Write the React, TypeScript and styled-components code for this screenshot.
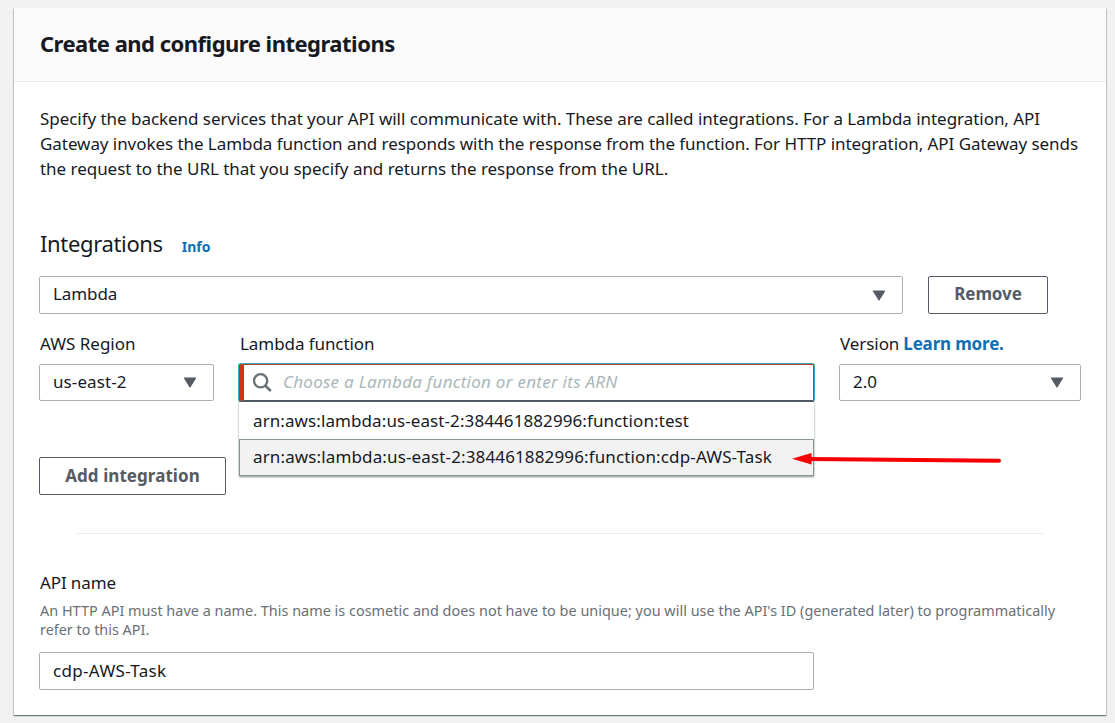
import React from "react";
import styled, { createGlobalStyle } from "styled-components";

const GlobalStyle = createGlobalStyle`
  *, *::before, *::after { box-sizing: border-box; }
  body {
    margin: 0;
    background: #f2f2f2;
    color: #16191f;
    font-family: "Noto Sans", "Open Sans", sans-serif;
    font-size: 17px;
    line-height: 25px;
    overflow: hidden;
  }
`;

const Page = styled.main`
  height: 723px;
  padding: 8px 9px 8px 14px;
`;

const Card = styled.section`
  height: 707px;
  background: #fff;
  box-shadow: 0 1px 1px rgba(0, 28, 36, 0.4), 1px 1px 1px rgba(0, 28, 36, 0.15),
    -1px 1px 1px rgba(0, 28, 36, 0.15);
`;

const CardHeader = styled.header`
  height: 74px;
  padding: 19px 25px 0;
  background: #fafafa;
  border-bottom: 1px solid #eaeded;
`;

const Text = styled.span<{ $track?: number }>`
  display: inline-block;
  white-space: nowrap;
  letter-spacing: ${(p) => p.$track ?? 0}px;
`;

const Title = styled.h2`
  margin: 0;
  padding-left: 1px;
  font-size: 22px;
  line-height: 32px;
  font-weight: 700;
`;

const CardBody = styled.div`
  display: flex;
  flex-direction: column;
  align-items: flex-start;
  padding: 24px 25px 0;
`;

const Paragraph = styled.p`
  display: flex;
  flex-direction: column;
  margin: 0 0 47px;
  padding-left: 1px;
`;

const SectionHeading = styled.div`
  display: flex;
  align-items: baseline;
  height: 32px;
  margin-bottom: 16px;
  padding-left: 1px;
  gap: 19px;
`;

const SectionTitle = styled.h3`
  margin: 0;
  font-size: 22px;
  line-height: 30px;
  font-weight: 400;
`;

const Link = styled.a<{ $small?: boolean }>`
  color: #0f6fb3;
  font-weight: 700;
  font-size: ${(p) => (p.$small ? 14 : 17)}px;
`;

const Row = styled.div<{ $gap: number }>`
  display: flex;
  align-items: flex-start;
  gap: ${(p) => p.$gap}px;
`;

const Box = styled.div<{ $width: number; $height?: number; $lift?: number }>`
  display: flex;
  align-items: center;
  justify-content: space-between;
  width: ${(p) => p.$width}px;
  height: ${(p) => p.$height ?? 38}px;
  padding: 0 16px ${(p) => p.$lift ?? 2}px 13px;
  border: 1px solid #aab0b3;
  border-radius: 2px;
  background: #fff;

  svg {
    margin-top: ${(p) => (p.$lift ? 4 : 2)}px;
  }
`;

const Button = styled.button<{ $width: number; $lift?: number }>`
  width: ${(p) => p.$width}px;
  height: 38px;
  padding: 0 0 ${(p) => p.$lift ?? 2}px;
  border: 1px solid #545b64;
  border-radius: 2px;
  background: #fff;
  color: #545b64;
  font: 700 17px/25px "Noto Sans", "Open Sans", sans-serif;
`;

const Fields = styled(Row)`
  margin: 17px 0 56px;
`;

const Field = styled.div`
  position: relative;
  display: flex;
  flex-direction: column;
  gap: 8px;
`;

const Label = styled.div`
  display: flex;
  gap: 4px;
  height: 25px;
  padding-left: 1px;
`;

const SearchBox = styled.div`
  display: flex;
  align-items: center;
  gap: 11px;
  width: 575px;
  height: 37px;
  padding: 0 0 2px 8px;
  border: 1px solid #a9432c;
  border-left: 5px solid #d13212;
  border-bottom-color: #545b64;
  border-radius: 2px;
  background: #fff;
  box-shadow: 0 0 0 1px #35a9bc;

  svg {
    margin-top: 2px;
  }
`;

const Placeholder = styled.span`
  color: #aab7b8;
  font-style: italic;
`;

const Menu = styled.ul`
  position: absolute;
  top: 70px;
  left: 0;
  width: 575px;
  margin: 0;
  padding: 0;
  list-style: none;
  background: #fff;
  border-top: 1px solid #545b64;
  box-shadow: 0 1px 2px rgba(0, 28, 36, 0.5);
`;

const Option = styled.li<{ $active?: boolean }>`
  height: 37px;
  padding: ${(p) => (p.$active ? 4 : 5)}px 13px 0;
  border: 1px solid ${(p) => (p.$active ? "#879596" : "transparent")};
  background: ${(p) => (p.$active ? "#f2f2f2" : "#fff")};
`;

const Pointer = styled.svg`
  position: absolute;
  top: 116px;
  left: 552px;
`;

const Divider = styled.hr`
  width: 966px;
  height: 1px;
  margin: 38px 0 36px 38px;
  border: 0;
  background: #eaeded;
`;

const Hint = styled.p`
  display: flex;
  flex-direction: column;
  margin: 6px 0 13px;
  padding-left: 1px;
  color: #687078;
  font-size: 14.4px;
  line-height: 19px;
`;

const Caret = () => (
  <svg width="14" height="11" viewBox="0 0 14 11">
    <path d="M1.4 1H12.6L7 10Z" fill="#545b64" stroke="#545b64" strokeWidth="1.2" strokeLinejoin="round" />
  </svg>
);

const SearchIcon = () => (
  <svg width="20" height="20" viewBox="0 0 20 20" fill="none" stroke="#687078">
    <circle cx="8.6" cy="7.8" r="6.6" strokeWidth="2.3" />
    <path d="M13 12.4 18.8 18" strokeWidth="2.6" />
  </svg>
);

export default function App() {
  return (
    <Page>
      <GlobalStyle />
      <Card>
        <CardHeader>
          <Title><Text $track={-0.51}>Create and configure integrations</Text></Title>
        </CardHeader>
        <CardBody>
          <Paragraph>
            <Text $track={-0.042}>Specify the backend services that your API will communicate with. These are called integrations. For a Lambda integration, API</Text>
            <Text $track={-0.056}>Gateway invokes the Lambda function and responds with the response from the function. For HTTP integration, API Gateway sends</Text>
            <Text $track={-0.035}>the request to the URL that you specify and returns the response from the URL.</Text>
          </Paragraph>
          <SectionHeading>
            <SectionTitle><Text $track={-0.35}>Integrations</Text></SectionTitle>
            <Link $small><Text>Info</Text></Link>
          </SectionHeading>
          <Row $gap={25}>
            <Box $width={864} $lift={4}><Text $track={-0.1}>Lambda</Text><Caret /></Box>
            <Button $width={120} $lift={4}><Text $track={-0.1}>Remove</Text></Button>
          </Row>
          <Fields $gap={25}>
            <Field>
              <Label><Text>AWS Region</Text></Label>
              <Box $width={175} $height={37}><Text $track={0.1}>us-east-2</Text><Caret /></Box>
            </Field>
            <Field>
              <Label><Text $track={-0.07}>Lambda function</Text></Label>
              <SearchBox>
                <SearchIcon />
                <Placeholder><Text $track={0.26}>Choose a Lambda function or enter its ARN</Text></Placeholder>
              </SearchBox>
              <Menu>
                <Option><Text $track={0.09}>arn:aws:lambda:us-east-2:384461882996:function:test</Text></Option>
                <Option $active><Text $track={0.135}>arn:aws:lambda:us-east-2:384461882996:function:cdp-AWS-Task</Text></Option>
              </Menu>
              <Pointer width="214" height="24" viewBox="0 0 214 24">
                <path d="M18 12 208 13.8" stroke="#f50000" strokeWidth="4" strokeLinecap="round" />
                <path d="M1 11.7 20.5 6V17.6Z" fill="#f50000" />
              </Pointer>
            </Field>
            <Field>
              <Label><Text $track={-0.07}>Version</Text><Link><Text $track={-0.17}>Learn more.</Text></Link></Label>
              <Box $width={242} $height={37}><Text>2.0</Text><Caret /></Box>
            </Field>
          </Fields>
          <Button $width={187}><Text $track={0.06}>Add integration</Text></Button>
          <Divider />
          <Label><Text $track={-0.12}>API name</Text></Label>
          <Hint>
            <Text $track={0.026}>An HTTP API must have a name. This name is cosmetic and does not have to be unique; you will use the API's ID (generated later) to programmatically</Text>
            <Text>refer to this API.</Text>
          </Hint>
          <Box $width={775}><Text $track={0.33}>cdp-AWS-Task</Text></Box>
        </CardBody>
      </Card>
    </Page>
  );
}
